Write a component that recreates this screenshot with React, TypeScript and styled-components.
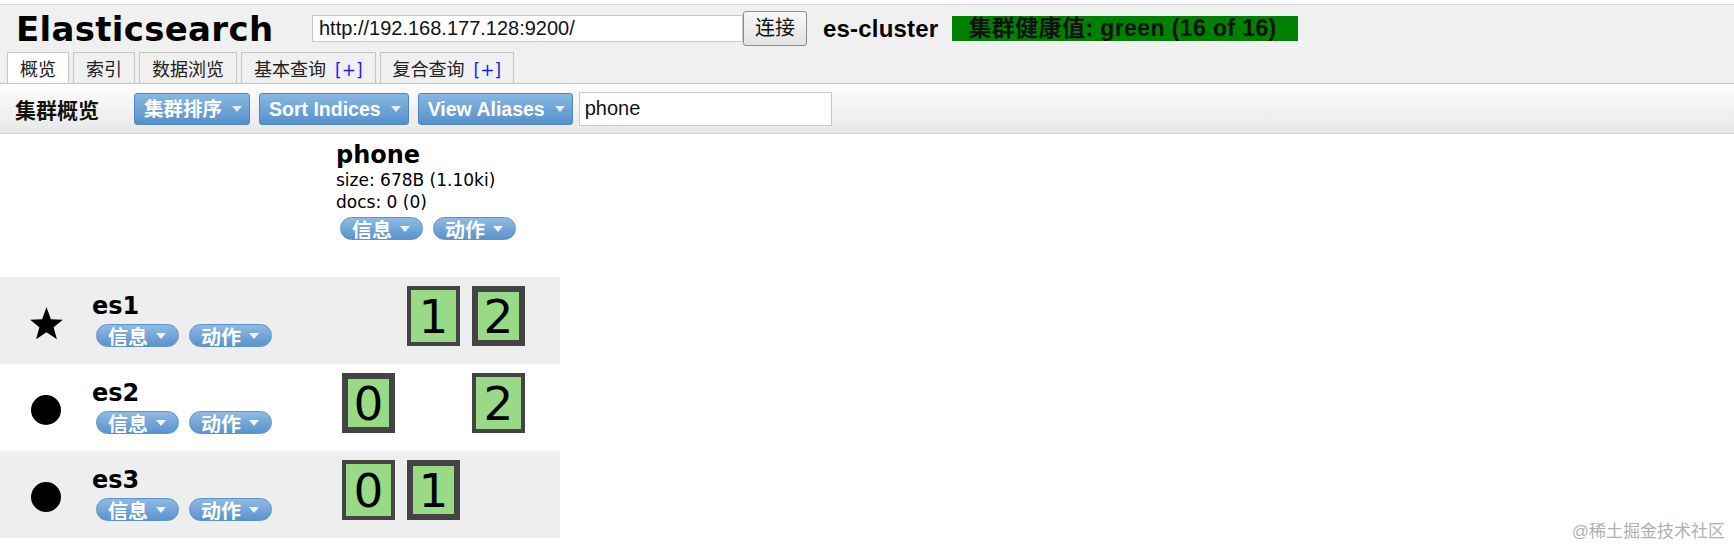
import React from "react";
import styled, { createGlobalStyle } from "styled-components";

const CJK = `"Liberation Sans", "Noto Sans CJK SC", sans-serif`;
const VERDANA = `"DejaVu Sans", Verdana, "Noto Sans CJK SC", sans-serif`;

const GlobalStyle = createGlobalStyle`
  html, body {
    margin: 0;
    padding: 0;
    background: #fff;
  }
  body {
    font-family: ${VERDANA};
    color: #000;
  }
`;

const Page = styled.div`
  position: relative;
  width: 1734px;
  height: 549px;
  overflow: hidden;
`;

const Header = styled.header`
  margin-top: 4px;
  border-top: 1px solid #d6d6d6;
  background: #f0f0f0;
`;

const TitleRow = styled.div`
  display: flex;
  align-items: center;
  height: 47px;
`;

const Title = styled.h1`
  margin: 0;
  width: 312px;
  padding-left: 16px;
  box-sizing: border-box;
  font: bold 34px/34px ${VERDANA};
  letter-spacing: 0.3px;
  color: #000;
`;

const UrlInput = styled.input`
  width: 431px;
  height: 27px;
  box-sizing: border-box;
  border: 1px solid #c9c9c9;
  padding: 0 6px;
  font: 20px ${CJK};
  color: #111;
  background: #fff;
  outline: none;
`;

const ConnectButton = styled.button`
  height: 35px;
  padding: 0 11px;
  border: 1px solid #8c8c8c;
  border-radius: 3px;
  background: linear-gradient(#f7f7f7, #e3e3e3);
  font: 20px/33px ${CJK};
  color: #111;
`;

const ClusterName = styled.span`
  margin-left: 16px;
  font: bold 24px ${CJK};
  letter-spacing: 0.2px;
`;

const Health = styled.div`
  margin-left: 14px;
  width: 346px;
  height: 25px;
  box-sizing: border-box;
  padding-left: 16px;
  display: flex;
  align-items: center;
  background: #008000;
  color: #111;
  font: bold 23px/25px ${CJK};
  letter-spacing: 0.4px;
  white-space: nowrap;
`;

const TabBar = styled.nav`
  display: flex;
  align-items: flex-end;
  gap: 4px;
  height: 31px;
  padding-left: 7px;
  border-bottom: 1px solid #c6c6c6;
`;

const Tab = styled.div<{ $active?: boolean }>`
  height: 31px;
  box-sizing: border-box;
  padding: 5px 12px 0;
  border: 1px solid #c6c6c6;
  border-bottom: none;
  background: ${(p) => (p.$active ? "#fff" : "#f0f0f0")};
  font: 18px/24px ${CJK};
  color: #222;
`;

const Plus = styled.span`
  color: #1a1aff;
  margin-left: 9px;
  font: 17px/24px ${VERDANA};
`;

const Toolbar = styled.div`
  display: flex;
  align-items: center;
  height: 49px;
  padding-left: 15px;
  background: linear-gradient(#fdfdfd, #e8e8e8);
  border-bottom: 1px solid #d5d5d5;
`;

const ToolbarTitle = styled.span`
  margin-right: 35px;
  font: bold 21px ${CJK};
  color: #111;
`;

const MenuButton = styled.div`
  display: inline-flex;
  align-items: center;
  gap: 10px;
  height: 32px;
  box-sizing: border-box;
  margin-right: 9px;
  padding: 0 7px 0 9px;
  border: 1px solid #4e87c2;
  border-radius: 3px;
  background: linear-gradient(#88b8e2, #5790cc);
  color: #fff;
  font: bold 19.5px/30px ${CJK};
  white-space: nowrap;
`;

const SearchInput = styled.input`
  width: 253px;
  height: 34px;
  box-sizing: border-box;
  margin-left: -3px;
  border: 1px solid #c9c9c9;
  padding: 0 5px;
  font: 20px ${CJK};
  color: #111;
  background: #fff;
  outline: none;
`;

const Overview = styled.div`
  width: 560px;
`;

const Row = styled.div<{ $shade?: boolean; $height: number }>`
  display: grid;
  grid-template-columns: 336px 224px;
  height: ${(p) => p.$height}px;
  background: ${(p) => (p.$shade ? "#eeeeee" : "#fff")};
`;

const IndexHead = styled.div`
  padding-top: 7px;
`;

const IndexName = styled.div`
  font: bold 24px/28px ${VERDANA};
`;

const Stat = styled.div`
  font: 17px/22px ${VERDANA};
`;

const PillGroup = styled.div`
  display: flex;
  gap: 10px;
  padding-left: 4px;
  margin-top: 4px;
`;

const Pill = styled.div`
  display: flex;
  align-items: flex-start;
  gap: 8px;
  height: 23px;
  box-sizing: border-box;
  padding: 0 12px 0 11px;
  border: 1px solid #5b93cb;
  border-radius: 12px;
  overflow: hidden;
  background: linear-gradient(#8fbbe3, #5a93cd);
`;

const PillLabel = styled.span`
  margin-top: 3px;
  font: bold 20px/20px ${CJK};
  color: #fff;
`;

const PillCaret = styled.svg`
  margin-top: 8px;
  flex: none;
`;

const NodeCell = styled.div`
  display: flex;
`;

const IconBox = styled.div`
  width: 92px;
  padding-top: 5px;
  display: flex;
  align-items: center;
  justify-content: center;
`;

const NodeInfo = styled.div`
  padding-top: 15px;
`;

const NodeName = styled.div`
  margin-bottom: 4px;
  font: bold 24px/28px ${VERDANA};
`;

const Shards = styled.div`
  display: flex;
  gap: 12px;
  padding: 9px 0 0 6px;
`;

const Shard = styled.div<{ $primary?: boolean; $empty?: boolean }>`
  width: 53px;
  height: 60px;
  box-sizing: border-box;
  display: flex;
  align-items: center;
  justify-content: center;
  border: ${(p) => (p.$primary ? 6 : 4)}px solid #444;
  background: #98da85;
  font: 47px/1 ${VERDANA};
  color: #000;
  visibility: ${(p) => (p.$empty ? "hidden" : "visible")};
`;

const Watermark = styled.div`
  position: absolute;
  right: 9px;
  bottom: 7px;
  font: 17px ${CJK};
  color: #b0b0b0;
`;

function Caret({ color = "#e4edf7" }: { color?: string }) {
  return (
    <svg width="10" height="6" viewBox="0 0 10 6">
      <polygon points="0,0 10,0 5,6" fill={color} />
    </svg>
  );
}

function ActionPill({ label }: { label: string }) {
  return (
    <Pill>
      <PillLabel>{label}</PillLabel>
      <PillCaret width="10" height="6" viewBox="0 0 10 6">
        <polygon points="0,0 10,0 5,6" fill="#eef4fa" />
      </PillCaret>
    </Pill>
  );
}

function Star() {
  return (
    <svg width="35" height="35" viewBox="0 0 32 32">
      <polygon
        points="16,1 20,12 31,12.5 22.5,19.5 25.5,30.5 16,24 6.5,30.5 9.5,19.5 1,12.5 12,12"
        fill="#000"
      />
    </svg>
  );
}

function Dot() {
  return (
    <svg width="30" height="30" viewBox="0 0 30 30">
      <circle cx="15" cy="15" r="15" fill="#000" />
    </svg>
  );
}

type Slot = { n: number; primary: boolean } | null;

const nodes: { name: string; master: boolean; slots: Slot[] }[] = [
  { name: "es1", master: true, slots: [null, { n: 1, primary: false }, { n: 2, primary: true }] },
  { name: "es2", master: false, slots: [{ n: 0, primary: true }, null, { n: 2, primary: false }] },
  { name: "es3", master: false, slots: [{ n: 0, primary: false }, { n: 1, primary: true }] },
];

export default function App() {
  return (
    <Page>
      <GlobalStyle />
      <Header>
        <TitleRow>
          <Title>Elasticsearch</Title>
          <UrlInput defaultValue="http://192.168.177.128:9200/" />
          <ConnectButton>连接</ConnectButton>
          <ClusterName>es-cluster</ClusterName>
          <Health>集群健康值: green (16 of 16)</Health>
        </TitleRow>
        <TabBar>
          <Tab $active>概览</Tab>
          <Tab>索引</Tab>
          <Tab>数据浏览</Tab>
          <Tab>
            基本查询<Plus>[+]</Plus>
          </Tab>
          <Tab>
            复合查询<Plus>[+]</Plus>
          </Tab>
        </TabBar>
      </Header>

      <Toolbar>
        <ToolbarTitle>集群概览</ToolbarTitle>
        <MenuButton>
          集群排序 <Caret />
        </MenuButton>
        <MenuButton>
          Sort Indices <Caret />
        </MenuButton>
        <MenuButton>
          View Aliases <Caret />
        </MenuButton>
        <SearchInput defaultValue="phone" />
      </Toolbar>

      <Overview>
        <Row $height={143}>
          <div />
          <IndexHead>
            <IndexName>phone</IndexName>
            <Stat>size: 678B (1.10ki)</Stat>
            <Stat>docs: 0 (0)</Stat>
            <PillGroup>
              <ActionPill label="信息" />
              <ActionPill label="动作" />
            </PillGroup>
          </IndexHead>
        </Row>
        {nodes.map((node, i) => (
          <Row key={node.name} $shade={i % 2 === 0} $height={87}>
            <NodeCell>
              <IconBox>{node.master ? <Star /> : <Dot />}</IconBox>
              <NodeInfo>
                <NodeName>{node.name}</NodeName>
                <PillGroup>
                  <ActionPill label="信息" />
                  <ActionPill label="动作" />
                </PillGroup>
              </NodeInfo>
            </NodeCell>
            <Shards>
              {node.slots.map((s, j) =>
                s ? (
                  <Shard key={j} $primary={s.primary}>
                    {s.n}
                  </Shard>
                ) : (
                  <Shard key={j} $empty />
                )
              )}
            </Shards>
          </Row>
        ))}
      </Overview>

      <Watermark>@稀土掘金技术社区</Watermark>
    </Page>
  );
}
